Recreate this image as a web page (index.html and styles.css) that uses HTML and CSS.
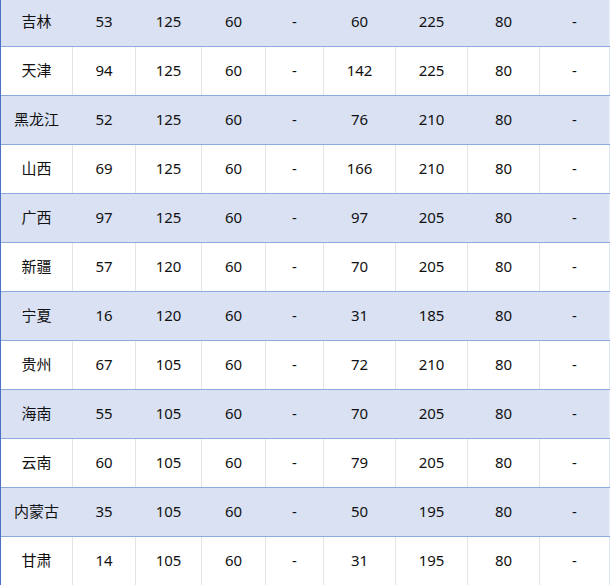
FILE: index.html
```html
<!DOCTYPE html>
<html lang="zh">
<head>
<meta charset="utf-8">
<link rel="stylesheet" href="styles.css">
</head>
<body>
<div class="sheet">
  <div class="row alt"><div class="c">吉林</div><div class="c">53</div><div class="c">125</div><div class="c">60</div><div class="c">-</div><div class="c">60</div><div class="c">225</div><div class="c">80</div><div class="c">-</div></div>
  <div class="row"><div class="c">天津</div><div class="c">94</div><div class="c">125</div><div class="c">60</div><div class="c">-</div><div class="c">142</div><div class="c">225</div><div class="c">80</div><div class="c">-</div></div>
  <div class="row alt"><div class="c">黑龙江</div><div class="c">52</div><div class="c">125</div><div class="c">60</div><div class="c">-</div><div class="c">76</div><div class="c">210</div><div class="c">80</div><div class="c">-</div></div>
  <div class="row"><div class="c">山西</div><div class="c">69</div><div class="c">125</div><div class="c">60</div><div class="c">-</div><div class="c">166</div><div class="c">210</div><div class="c">80</div><div class="c">-</div></div>
  <div class="row alt"><div class="c">广西</div><div class="c">97</div><div class="c">125</div><div class="c">60</div><div class="c">-</div><div class="c">97</div><div class="c">205</div><div class="c">80</div><div class="c">-</div></div>
  <div class="row"><div class="c">新疆</div><div class="c">57</div><div class="c">120</div><div class="c">60</div><div class="c">-</div><div class="c">70</div><div class="c">205</div><div class="c">80</div><div class="c">-</div></div>
  <div class="row alt"><div class="c">宁夏</div><div class="c">16</div><div class="c">120</div><div class="c">60</div><div class="c">-</div><div class="c">31</div><div class="c">185</div><div class="c">80</div><div class="c">-</div></div>
  <div class="row"><div class="c">贵州</div><div class="c">67</div><div class="c">105</div><div class="c">60</div><div class="c">-</div><div class="c">72</div><div class="c">210</div><div class="c">80</div><div class="c">-</div></div>
  <div class="row alt"><div class="c">海南</div><div class="c">55</div><div class="c">105</div><div class="c">60</div><div class="c">-</div><div class="c">70</div><div class="c">205</div><div class="c">80</div><div class="c">-</div></div>
  <div class="row"><div class="c">云南</div><div class="c">60</div><div class="c">105</div><div class="c">60</div><div class="c">-</div><div class="c">79</div><div class="c">205</div><div class="c">80</div><div class="c">-</div></div>
  <div class="row alt"><div class="c">内蒙古</div><div class="c">35</div><div class="c">105</div><div class="c">60</div><div class="c">-</div><div class="c">50</div><div class="c">195</div><div class="c">80</div><div class="c">-</div></div>
  <div class="row"><div class="c">甘肃</div><div class="c">14</div><div class="c">105</div><div class="c">60</div><div class="c">-</div><div class="c">31</div><div class="c">195</div><div class="c">80</div><div class="c">-</div></div>
</div>
</body>
</html>
```

FILE: styles.css
```css
html, body {
  margin: 0;
  padding: 0;
  background: #ffffff;
  overflow: hidden;
}
body {
  width: 611px;
  height: 585px;
  font-family: "Noto Sans", "Noto Sans CJK SC", sans-serif;
  font-size: 15px;
  line-height: 20px;
  color: #111111;
}
.sheet {
  margin-top: -2px;
  width: 610px;
  border-left: 1px solid #4a72c2;
  box-sizing: border-box;
}
.row {
  display: flex;
  height: 49px;
  border-bottom: 1px solid #8eaadc;
  box-sizing: border-box;
  background: #ffffff;
}
.row.alt {
  background: #d9e1f3;
}
.c {
  box-sizing: border-box;
  display: flex;
  align-items: center;
  justify-content: center;
  padding-bottom: 2px;
  border-right: 1px solid #e4e4e4;
  width: 72px;
  flex: none;
}
.row.alt .c {
  border-right-color: #d9e1f3;
}
.c:nth-child(1) { width: 72px; }
.c:nth-child(2) { width: 63px; }
.c:nth-child(3) { width: 66px; }
.c:nth-child(4) { width: 64px; }
.c:nth-child(5) { width: 58px; }
.c:nth-child(6) { width: 72px; }
.c:nth-child(7) { width: 72px; }
.c:nth-child(8) { width: 72px; }
.c:nth-child(9) { width: 70px; border-right-color: #dbe6f7; }
.row.alt .c:nth-child(9) { border-right-color: #e6eefa; }
```
